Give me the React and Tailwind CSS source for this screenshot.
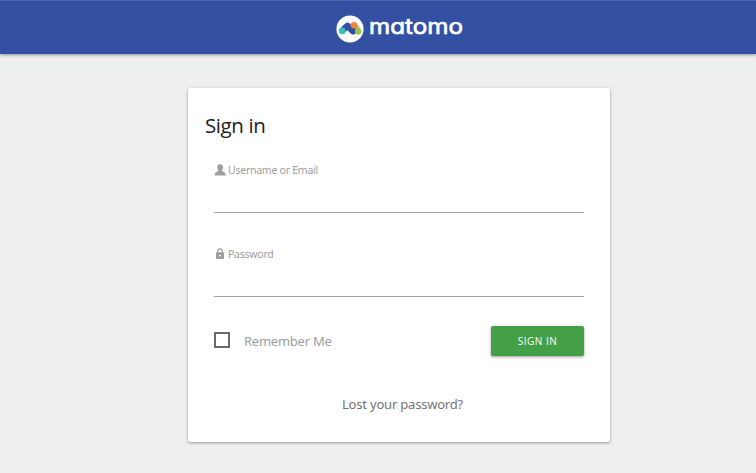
const UserIcon = () => (
  <svg viewBox="0 0 12 12" className="h-3 w-3" fill="currentColor">
    <ellipse cx="6.200" cy="3.400" rx="2.800" ry="3.200" />
    <path d="M4.700 5h3v1.700c.7.8 4 1 4.100 4.800H.6C.7 7.700 4 7.500 4.700 6.700z" />
  </svg>
);

const LockIcon = () => (
  <svg viewBox="0 0 12 12" className="h-3 w-3" fill="currentColor">
    <path
      d="M3.800 5V3a2.200 2.200 0 0 1 4.400 0V5"
      fill="none"
      stroke="currentColor"
      strokeWidth="1.300"
    />
    <rect x="2" y="4.300" width="8" height="6.700" rx="0.800" />
    <circle cx="6" cy="7.600" r="0.900" fill="#fff" />
  </svg>
);

const Logo = () => (
  <svg
    viewBox="0 0 128 28"
    className="h-7 w-32 overflow-visible"
    role="img"
    aria-label="matomo"
  >
    <circle cx="14" cy="14" r="13.600" fill="#fff" />
    <path
      d="M8.500 13.500L11.500 10.800L16.900 16.300L20 13.500"
      fill="none"
      stroke="#3450a3"
      strokeWidth="6.400"
      strokeLinejoin="round"
      strokeLinecap="round"
    />
    <path
      d="M20.300 9L24.800 14.200A3.300 3.300 0 1 1 19 16z"
      fill="#95c748"
    />
    <circle cx="6.300" cy="15.900" r="3.300" fill="#35bfc0" />
    <circle cx="18" cy="10.200" r="3.300" fill="#f38334" />
    <text
      x="33"
      y="19"
      textLength="94"
      lengthAdjust="spacingAndGlyphs"
      className="fill-white stroke-white font-['Inter',sans-serif] text-[22px] leading-none font-normal [font-feature-settings:'cv11']"
      strokeWidth="0.700"
      strokeLinejoin="round"
    >
      matomo
    </text>
  </svg>
);

const Field = ({ id, label, type, icon }) => (
  <div className="h-[84px]">
    <label
      htmlFor={id}
      className="flex h-4 items-center gap-[2px] text-[10.500px] tracking-[-0.250px] text-[#9e9e9e]"
    >
      {icon}
      <span className="mt-px">{label}</span>
    </label>
    <input
      id={id}
      type={type}
      className="block h-[35px] w-full border-b border-[#a3a3a3] bg-transparent text-sm outline-none"
    />
  </div>
);

export default function App() {
  return (
    <div className="h-[473px] overflow-hidden bg-[#eeeff1] font-['Noto_Sans',sans-serif]">
      <header className="flex h-[54px] justify-center border-t border-[#4865ad] bg-[#3450a3] pt-[14px] pl-11 shadow-[0_1px_3px_rgba(0,0,0,0.4)]">
        <Logo />
      </header>

      <main className="mt-[34px] ml-[188px] h-[354px] w-[422px] rounded-[2px] bg-white pt-[23px] pr-[26px] pl-[17px] shadow-[0_1px_3px_rgba(0,0,0,0.38)]">
        <h1 className="font-['Open_Sans',sans-serif] text-[20.500px] leading-7 tracking-[-0.400px] text-[#212121]">
          Sign in
        </h1>

        <form className="mt-[23px] ml-[9px]">
          <Field
            id="login"
            label="Username or Email"
            type="text"
            icon={<UserIcon />}
          />
          <Field
            id="password"
            label="Password"
            type="password"
            icon={<LockIcon />}
          />

          <div className="-mt-[4px] flex h-[30px] items-center justify-between">
            <label className="flex items-center gap-[14px] text-[13px] tracking-[-0.250px] text-[#9e9e9e]">
              <input
                type="checkbox"
                className="-mt-[3px] h-4 w-4 appearance-none border-2 border-[#6a6a6a]"
              />
              <span className="mt-px">Remember Me</span>
            </label>
            <button
              type="button"
              className="h-[30px] w-[93px] rounded-[2px] bg-[#43a047] font-['Open_Sans',sans-serif] text-[10px] tracking-[0.500px] text-white shadow-[0_1px_3px_rgba(0,0,0,0.4)]"
            >
              SIGN IN
            </button>
          </div>
        </form>

        <p className="mt-[38px] pl-[16px] text-center text-[13px] leading-5 tracking-[-0.200px] text-[#757575]">
          <a href="#">Lost your password?</a>
        </p>
      </main>
    </div>
  );
}
